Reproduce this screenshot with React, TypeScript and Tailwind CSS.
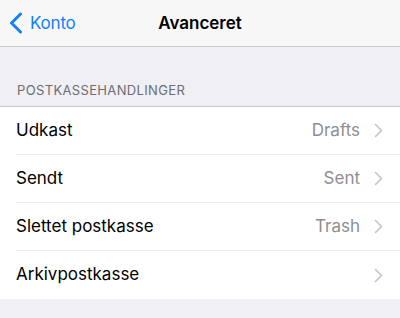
import React from 'react';

const rows = [
  { label: 'Udkast', value: 'Drafts' },
  { label: 'Sendt', value: 'Sent' },
  { label: 'Slettet postkasse', value: 'Trash' },
  { label: 'Arkivpostkasse', value: '' },
];

const Chevron = () => (
  <svg width="9" height="15" viewBox="0 0 9 15" className="shrink-0">
    <path d="M1.5 1.5 L7.5 7.5 L1.5 13.5" fill="none" stroke="#c4c4c9" strokeWidth="1.6" strokeLinecap="round" strokeLinejoin="round" />
  </svg>
);

export default function App() {
  return (
    <div
      className="w-[400px] h-[318px] bg-[#efeff4] overflow-hidden"
      style={{ fontFamily: 'Inter, "Liberation Sans", sans-serif' }}
    >
      {/* Nav bar */}
      <div className="relative h-[47px] bg-[#f7f7f8] border-b border-[#c8c7cc] flex items-center">
        <div className="flex items-center pl-[9px] text-[#157efb]">
          <svg width="14" height="22" viewBox="0 0 14 22">
            <path d="M11.5 2 L2.5 11 L11.5 20" fill="none" stroke="#157efb" strokeWidth="3" strokeLinecap="round" strokeLinejoin="round" />
          </svg>
          <span className="ml-[7px] text-[17px] leading-none tracking-[-0.2px]">Konto</span>
        </div>
        <div className="absolute inset-x-0 text-center text-[17px] font-semibold text-black leading-none pointer-events-none">
          Avanceret
        </div>
      </div>

      {/* Section header */}
      <div className="h-[59px] flex items-end pb-[9px] pl-[17px] text-[13px] text-[#6d6d72] tracking-[0.35px] leading-none">
        POSTKASSEHANDLINGER
      </div>

      {/* List */}
      <div className="bg-white border-t border-[#c8c7cc]">
        {rows.map((r, i) => (
          <div key={r.label} className="pl-[16px]">
            <div
              className={`h-[48px] flex items-center pr-[17px] ${i < rows.length - 1 ? 'border-b border-[#ececee]' : ''}`}
            >
              <span className="flex-1 text-[17px] text-black">{r.label}</span>
              {r.value && (
                <span className="text-[17px] text-[#8e8e93] mr-[14px]">{r.value}</span>
              )}
              <Chevron />
            </div>
          </div>
        ))}
      </div>
    </div>
  );
}
